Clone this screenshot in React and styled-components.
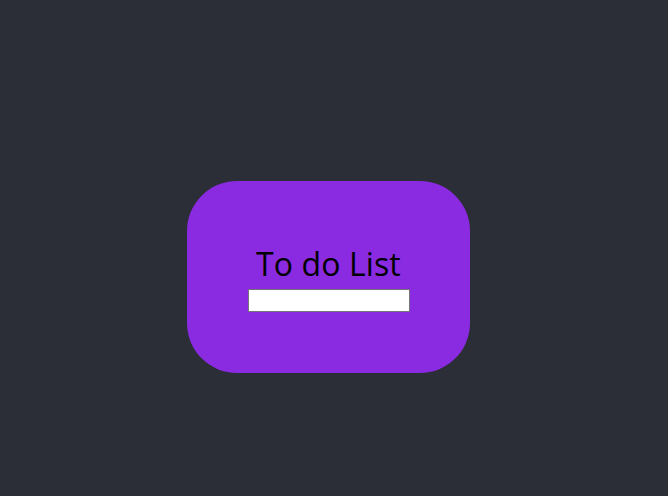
import styled, { createGlobalStyle } from "styled-components";

const GlobalStyle = createGlobalStyle`
  html, body {
    margin: 0;
    padding: 0;
    background: #2b2e37;
    font-family: "Open Sans", "Noto Sans", sans-serif;
  }
`;

const Page = styled.main`
  min-height: 496px;
  box-sizing: border-box;
  display: flex;
  justify-content: center;
  align-items: flex-start;
  padding: 181px 11px 0 0;
`;

const Card = styled.section`
  width: 283px;
  height: 192px;
  border-radius: 50px;
  background: #8a2be2;
  display: flex;
  flex-direction: column;
  align-items: center;
  justify-content: center;
  box-sizing: border-box;
`;

const Title = styled.h1`
  margin: 0;
  font-size: 32px;
  font-weight: 400;
  line-height: 44px;
  color: #000;
  letter-spacing: 0.1px;
`;

const TaskInput = styled.input`
  width: 162px;
  height: 23px;
  margin-top: 3px;
  box-sizing: border-box;
  border: 1px solid #767676;
  background: #fff;
  padding: 1px 2px;
  outline: none;
`;

export default function App() {
  return (
    <>
      <GlobalStyle />
      <Page>
        <Card>
          <Title>To do List</Title>
          <TaskInput type="text" />
        </Card>
      </Page>
    </>
  );
}
